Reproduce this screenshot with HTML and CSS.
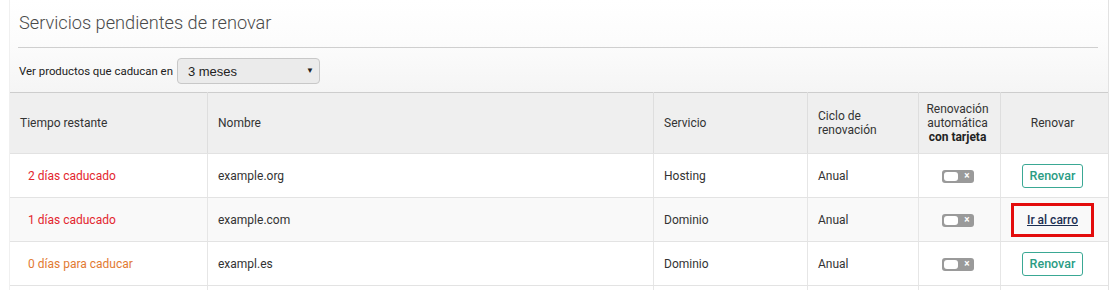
FILE: index.html
```html
<!DOCTYPE html>
<html lang="es">
<head>
    <meta charset="UTF-8">
    <meta name="viewport" content="width=device-width, initial-scale=1.0">
    <title>Servicios pendientes de renovar</title>
    <link rel="stylesheet" href="styles.css">
</head>
<body>
    <div class="panel">
        <h2 class="panel-title">Servicios pendientes de renovar</h2>
        <hr class="panel-rule">
        <div class="filter">
            <label for="caducan">Ver productos que caducan en</label>
            <div class="select-wrap">
                <select id="caducan">
                    <option>1 mes</option>
                    <option selected>3 meses</option>
                    <option>6 meses</option>
                </select>
            </div>
        </div>
        <table class="renew-table">
            <thead>
                <tr>
                    <th class="col-time">Tiempo restante</th>
                    <th class="col-name">Nombre</th>
                    <th class="col-service">Servicio</th>
                    <th class="col-cycle">Ciclo de<br>renovación</th>
                    <th class="col-auto center">Renovación<br>automática<br><b>con tarjeta</b></th>
                    <th class="col-renew center">Renovar</th>
                </tr>
            </thead>
            <tbody>
                <tr>
                    <td class="time expired">2 días caducado</td>
                    <td>example.org</td>
                    <td>Hosting</td>
                    <td>Anual</td>
                    <td class="center"><span class="toggle"><span class="knob"></span><span class="off">×</span></span></td>
                    <td class="center"><button class="btn-renew">Renovar</button></td>
                </tr>
                <tr>
                    <td class="time expired">1 días caducado</td>
                    <td>example.com</td>
                    <td>Dominio</td>
                    <td>Anual</td>
                    <td class="center"><span class="toggle"><span class="knob"></span><span class="off">×</span></span></td>
                    <td class="center"><a class="cart-link" href="#">Ir al carro</a></td>
                </tr>
                <tr>
                    <td class="time soon">0 días para caducar</td>
                    <td>exampl.es</td>
                    <td>Dominio</td>
                    <td>Anual</td>
                    <td class="center"><span class="toggle"><span class="knob"></span><span class="off">×</span></span></td>
                    <td class="center"><button class="btn-renew">Renovar</button></td>
                </tr>
                <tr class="last">
                    <td></td><td></td><td></td><td></td><td></td><td></td>
                </tr>
            </tbody>
        </table>
    </div>
</body>
</html>
```

FILE: styles.css
```css
body {
    margin: 0;
    font-family: Roboto, "Liberation Sans", sans-serif;
    font-size: 12px;
    color: #333;
    background: #fff;
}
.panel {
    margin-left: 9px;
    width: 1100px;
    box-sizing: border-box;
    border-left: 1px solid #f0f0f0;
    border-right: 1px solid #e2e2e2;
    background: linear-gradient(#fff 0, #fcfcfc 40px, #f5f5f5 93px);
}
.panel-title {
    margin: 0;
    padding: 10px 9px 0;
    font-size: 18.2px;
    font-weight: 300;
    line-height: 26px;
    color: #4a4a4a;
}
.panel-rule {
    margin: 11px 10px 0 8px;
    border: 0;
    border-top: 1px solid #cfcfcf;
    height: 0;
}
.filter {
    display: flex;
    align-items: center;
    padding: 10px 9px 8px;
}
.filter label {
    margin-right: 4px;
    font-size: 11.4px;
    color: #222;
}
.select-wrap {
    position: relative;
}
.select-wrap::after {
    content: "▼";
    position: absolute;
    right: 6px;
    top: 8px;
    font-size: 8px;
    color: #222;
    pointer-events: none;
}
.select-wrap select {
    appearance: none;
    -webkit-appearance: none;
    width: 143px;
    height: 26px;
    padding: 0 10px;
    border: 1px solid #c8c8c8;
    border-radius: 4px;
    background: #ebebeb;
    font-family: "Liberation Sans", Arial, sans-serif;
    font-size: 13px;
    color: #222;
}
.renew-table {
    width: 100%;
    border-collapse: collapse;
    table-layout: fixed;
    background: #fff;
}
.renew-table thead tr {
    background: #efefef;
    border-top: 1px solid #cdcdcd;
}
.renew-table th {
    height: 60px;
    padding: 0 10px;
    font-weight: normal;
    text-align: left;
    line-height: 14px;
    border-left: 1px solid #dedede;
    border-bottom: 1px solid #e2e2e2;
}
.renew-table th:first-child,
.renew-table td:first-child {
    border-left: 0;
}
.renew-table th b {
    color: #222;
}
.col-time { width: 177px; }
.col-name { width: 425px; }
.col-service { width: 133px; }
.col-cycle { width: 90px; }
.col-auto { width: 77px; }
.renew-table .center {
    text-align: center;
    padding-left: 0;
    padding-right: 4px;
}
.renew-table td {
    height: 43px;
    padding: 0 10px;
    border-left: 1px solid #e6e6e6;
    border-bottom: 1px solid #e3e3e3;
}
.renew-table tbody tr:nth-child(2) {
    background: #f9f9f9;
}
.renew-table tr.last td {
    height: 4px;
    border-bottom: 0;
}
.renew-table td.time {
    padding-left: 18px;
}
.expired { color: #e3262e; }
.soon { color: #e27a32; }
.toggle {
    display: inline-flex;
    align-items: center;
    justify-content: space-between;
    width: 32px;
    height: 13px;
    padding: 0 4px 0 2px;
    box-sizing: border-box;
    border-radius: 3px;
    background: #9a9a9a;
    vertical-align: middle;
}
.knob {
    width: 14px;
    height: 9px;
    border-radius: 3px;
    background: #fff;
}
.off {
    color: #fff;
    font-size: 10px;
    font-weight: bold;
    line-height: 10px;
}
.btn-renew {
    width: 61px;
    height: 24px;
    padding: 0;
    border: 1px solid #3aa894;
    border-radius: 3px;
    background: #fff;
    color: #2b9c84;
    font-family: Roboto, sans-serif;
    font-size: 12.5px;
    font-weight: 500;
    cursor: pointer;
}
.cart-link {
    display: inline-block;
    padding: 7px 13px;
    line-height: 14px;
    border: 3px solid #e30c0c;
    color: #1c2f52;
    font-weight: 500;
    text-decoration: underline;
}
```
